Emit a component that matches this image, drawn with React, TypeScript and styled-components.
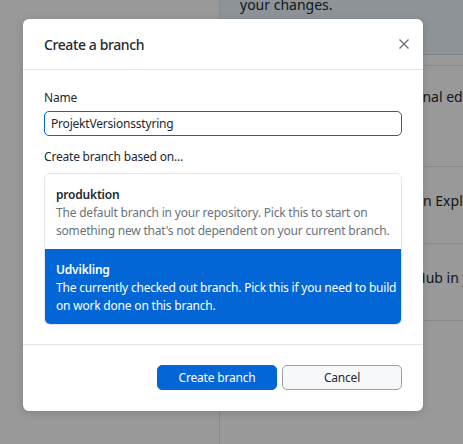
import styled, { createGlobalStyle } from "styled-components";

const GlobalStyle = createGlobalStyle`
  html, body {
    margin: 0;
    padding: 0;
    width: 463px;
    height: 444px;
    overflow: hidden;
    font-family: "Noto Sans", "Liberation Sans", sans-serif;
  }
`;

const Shell = styled.div`
  position: relative;
  width: 463px;
  height: 444px;
  display: flex;
  background: #ffffff;
  overflow: hidden;
`;

const SidePane = styled.div`
  width: 219px;
  flex-shrink: 0;
  border-right: 1px solid #e1e4e8;
`;

const MainPane = styled.div`
  flex: 1;
  display: flex;
  flex-direction: column;
`;

const Notice = styled.div`
  height: 55px;
  box-sizing: border-box;
  background: #edf5fe;
  border-bottom: 1px solid #d8dde3;
  padding: 0 0 0 20px;
  font-size: 14px;
  color: #24292e;
  line-height: 20px;
  margin-bottom: 10px;
  & > span {
    display: block;
    margin-top: -5px;
  }
`;

const ActionList = styled.div`
  border-top: 1px solid #e1e4e8;
`;

const Action = styled.div<{ $tall?: boolean }>`
  height: ${p => (p.$tall ? 101 : 77)}px;
  border-bottom: 1px solid #e1e4e8;
  padding: ${p => (p.$tall ? 21 : 24)}px 0 0 20px;
  box-sizing: border-box;
  font-size: 14px;
  line-height: 20px;
  color: #24292e;
  white-space: nowrap;
`;

const Overlay = styled.div`
  position: absolute;
  inset: 0;
  background: rgba(0, 0, 0, 0.4);
`;

const Dialog = styled.div`
  position: absolute;
  left: 23px;
  top: 19px;
  width: 400px;
  background: #ffffff;
  border-radius: 6px;
  box-shadow: 0 2px 8px rgba(0, 0, 0, 0.15);
  color: #24292e;
  display: flex;
  flex-direction: column;
  letter-spacing: -0.2px;
`;

const Header = styled.div`
  height: 50px;
  display: flex;
  align-items: center;
  justify-content: space-between;
  padding: 0 9px 0 21px;
  border-bottom: 1px solid #e1e4e8;
`;

const Title = styled.h1`
  margin: 0;
  font-size: 14px;
  font-weight: 500;
  letter-spacing: -0.4px;
`;

const Close = styled.button`
  border: none;
  background: none;
  padding: 4px;
  display: flex;
  color: #6a737d;
`;

const Body = styled.div`
  padding: 19px 21px 19px;
  display: flex;
  flex-direction: column;
`;

const Label = styled.label`
  font-size: 12px;
  line-height: 18px;
  margin-bottom: 4px;
`;

const Input = styled.input`
  height: 25px;
  box-sizing: border-box;
  border: 1px solid #0366d6;
  border-radius: 5px;
  padding: 0 6px;
  font: inherit;
  font-size: 12px;
  letter-spacing: -0.2px;
  color: #24292e;
  outline: none;
  margin-bottom: 12px;
`;

const Hint = styled.div`
  font-size: 12px;
  line-height: 18px;
  margin-bottom: 7px;
`;

const Options = styled.div`
  border: 1px solid #e1e4e8;
  border-radius: 6px;
  overflow: hidden;
`;

const Option = styled.div<{ $selected?: boolean }>`
  padding: 12px 3px 9px 11px;
  background: ${p => (p.$selected ? "#0366d6" : "#ffffff")};
  color: ${p => (p.$selected ? "#ffffff" : "#24292e")};
  font-size: 12px;
  line-height: 18px;
  strong {
    display: block;
    font-weight: 600;
  }
  p {
    margin: 0;
    color: ${p => (p.$selected ? "#ffffff" : "#6a737d")};
  }
`;

const Footer = styled.div`
  border-top: 1px solid #e1e4e8;
  padding: 20px 21px 21px;
  display: flex;
  justify-content: flex-end;
  gap: 5px;
`;

const Button = styled.button<{ $primary?: boolean }>`
  width: 120px;
  height: 25px;
  border-radius: 5px;
  font: inherit;
  font-size: 12px;
  letter-spacing: -0.2px;
  border: 1px solid ${p => (p.$primary ? "#0366d6" : "#9aa0a6")};
  background: ${p => (p.$primary ? "#0366d6" : "#f6f8fa")};
  color: ${p => (p.$primary ? "#ffffff" : "#24292e")};
`;

export default function App() {
  return (
    <>
      <GlobalStyle />
      <Shell>
        <SidePane />
        <MainPane>
          <Notice>
            <span>your changes.</span>
          </Notice>
          <ActionList>
            <Action $tall>Open the repo in your external editor</Action>
            <Action>Show the files of your repo in Explorer</Action>
            <Action>Open the repo page on GitHub in your browser</Action>
          </ActionList>
        </MainPane>
        <Overlay />
        <Dialog>
          <Header>
            <Title>Create a branch</Title>
            <Close aria-label="Close">
              <svg width="12" height="12" viewBox="0 0 12 12">
                <path d="M1.5 1.5 L10.5 10.5 M10.5 1.5 L1.5 10.5" stroke="currentColor" strokeWidth="1.4" />
              </svg>
            </Close>
          </Header>
          <Body>
            <Label>Name</Label>
            <Input defaultValue="ProjektVersionsstyring" />
            <Hint>Create branch based on...</Hint>
            <Options>
              <Option>
                <strong>produktion</strong>
                <p>
                  The default branch in your repository. Pick this to start on something new that's not
                  dependent on your current branch.
                </p>
              </Option>
              <Option $selected>
                <strong>Udvikling</strong>
                <p>The currently checked out branch. Pick this if you need to build on work done on this branch.</p>
              </Option>
            </Options>
          </Body>
          <Footer>
            <Button $primary>Create branch</Button>
            <Button>Cancel</Button>
          </Footer>
        </Dialog>
      </Shell>
    </>
  );
}
